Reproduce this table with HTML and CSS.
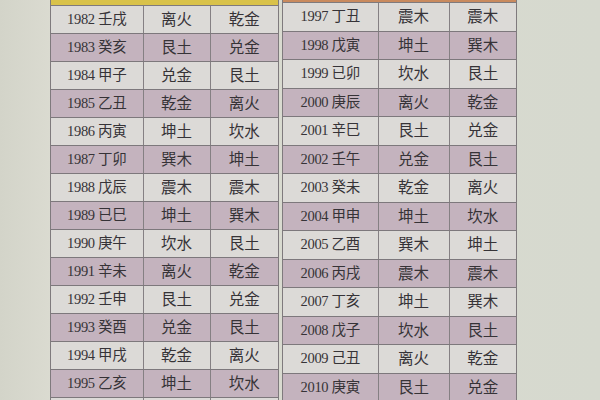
FILE: index.html
```html
<!DOCTYPE html>
<html lang="zh">
<head>
<meta charset="utf-8">
<link rel="stylesheet" href="styles.css">
</head>
<body>
<div class="page">
  <div class="margin"></div>
  <div class="block left">
    <div class="head yellow"></div>
    <table class="tbl">
      <colgroup><col class="c1"><col class="c2"><col class="c3"></colgroup>
      <tr class="w"><td>1982 壬戌</td><td>离火</td><td>乾金</td></tr>
      <tr class="p"><td>1983 癸亥</td><td>艮土</td><td>兑金</td></tr>
      <tr class="w"><td>1984 甲子</td><td>兑金</td><td>艮土</td></tr>
      <tr class="p"><td>1985 乙丑</td><td>乾金</td><td>离火</td></tr>
      <tr class="w"><td>1986 丙寅</td><td>坤土</td><td>坎水</td></tr>
      <tr class="p"><td>1987 丁卯</td><td>巽木</td><td>坤土</td></tr>
      <tr class="w"><td>1988 戊辰</td><td>震木</td><td>震木</td></tr>
      <tr class="p"><td>1989 已巳</td><td>坤土</td><td>巽木</td></tr>
      <tr class="w"><td>1990 庚午</td><td>坎水</td><td>艮土</td></tr>
      <tr class="p"><td>1991 辛未</td><td>离火</td><td>乾金</td></tr>
      <tr class="w"><td>1992 壬申</td><td>艮土</td><td>兑金</td></tr>
      <tr class="p"><td>1993 癸酉</td><td>兑金</td><td>艮土</td></tr>
      <tr class="w"><td>1994 甲戌</td><td>乾金</td><td>离火</td></tr>
      <tr class="p"><td>1995 乙亥</td><td>坤土</td><td>坎水</td></tr>
      <tr class="w"><td>&nbsp;</td><td>&nbsp;</td><td>&nbsp;</td></tr>
    </table>
  </div>
  <div class="block right">
    <div class="head orange"></div>
    <table class="tbl tall">
      <colgroup><col class="d1"><col class="d2"><col class="d3"></colgroup>
      <tr class="w"><td>1997 丁丑</td><td>震木</td><td>震木</td></tr>
      <tr class="p"><td>1998 戊寅</td><td>坤土</td><td>巽木</td></tr>
      <tr class="w"><td>1999 已卯</td><td>坎水</td><td>艮土</td></tr>
      <tr class="p"><td>2000 庚辰</td><td>离火</td><td>乾金</td></tr>
      <tr class="w"><td>2001 辛巳</td><td>艮土</td><td>兑金</td></tr>
      <tr class="p"><td>2002 壬午</td><td>兑金</td><td>艮土</td></tr>
      <tr class="w"><td>2003 癸未</td><td>乾金</td><td>离火</td></tr>
      <tr class="p"><td>2004 甲申</td><td>坤土</td><td>坎水</td></tr>
      <tr class="w"><td>2005 乙酉</td><td>巽木</td><td>坤土</td></tr>
      <tr class="p"><td>2006 丙戌</td><td>震木</td><td>震木</td></tr>
      <tr class="w"><td>2007 丁亥</td><td>坤土</td><td>巽木</td></tr>
      <tr class="p"><td>2008 戊子</td><td>坎水</td><td>艮土</td></tr>
      <tr class="w"><td>2009 己丑</td><td>离火</td><td>乾金</td></tr>
      <tr class="p"><td>2010 庚寅</td><td>艮土</td><td>兑金</td></tr>
      <tr class="w"><td>&nbsp;</td><td>&nbsp;</td><td>&nbsp;</td></tr>
    </table>
  </div>
</div>
</body>
</html>
```
FILE: styles.css
```css
html, body {
  margin: 0;
  padding: 0;
  width: 600px;
  height: 400px;
  overflow: hidden;
  background: #d5d7cc;
}
.page {
  display: flex;
  height: 400px;
  overflow: hidden;
  background: linear-gradient(90deg, #d3d4c9 0%, #dcdcd2 10%, #d8dacf 60%, #d6d9cf 100%);
}
.margin {
  width: 50px;
  flex: none;
}
.block {
  flex: none;
  display: flex;
  flex-direction: column;
  border-left: 1px solid #7f7a7d;
  border-right: 1px solid #7f7a7d;
}
.left {
  width: 227px;
}
.right {
  width: 233px;
  margin-left: 3px;
}
.head {
  flex: none;
}
.yellow {
  height: 5px;
  background: #d9c24a;
  border-bottom: 1px solid #7f7a7d;
}
.orange {
  height: 2px;
  background: #c98a5e;
  border-bottom: 1px solid #7f7a7d;
}
.tbl {
  border-collapse: collapse;
  table-layout: fixed;
  width: 100%;
  font-family: "Liberation Serif", "Noto Sans CJK SC", serif;
  color: #363337;
}
.c1 { width: 92px; }
.c2 { width: 67px; }
.c3 { width: 68px; }
.d1 { width: 95px; }
.d2 { width: 71px; }
.d3 { width: 67px; }
.tbl td {
  height: 27px;
  padding: 0;
  text-align: center;
  vertical-align: middle;
  font-size: 15.5px;
  line-height: 27px;
  border-bottom: 1px solid #7d787c;
  border-left: 1px solid #858083;
  white-space: nowrap;
}
.tbl td:first-child {
  border-left: none;
  font-size: 14.5px;
  letter-spacing: -0.3px;
}
.tall td {
  height: 27.5px;
  line-height: 27.5px;
}
.w td {
  background: #dcdad7;
}
.p td {
  background: #c4b3be;
}
```
